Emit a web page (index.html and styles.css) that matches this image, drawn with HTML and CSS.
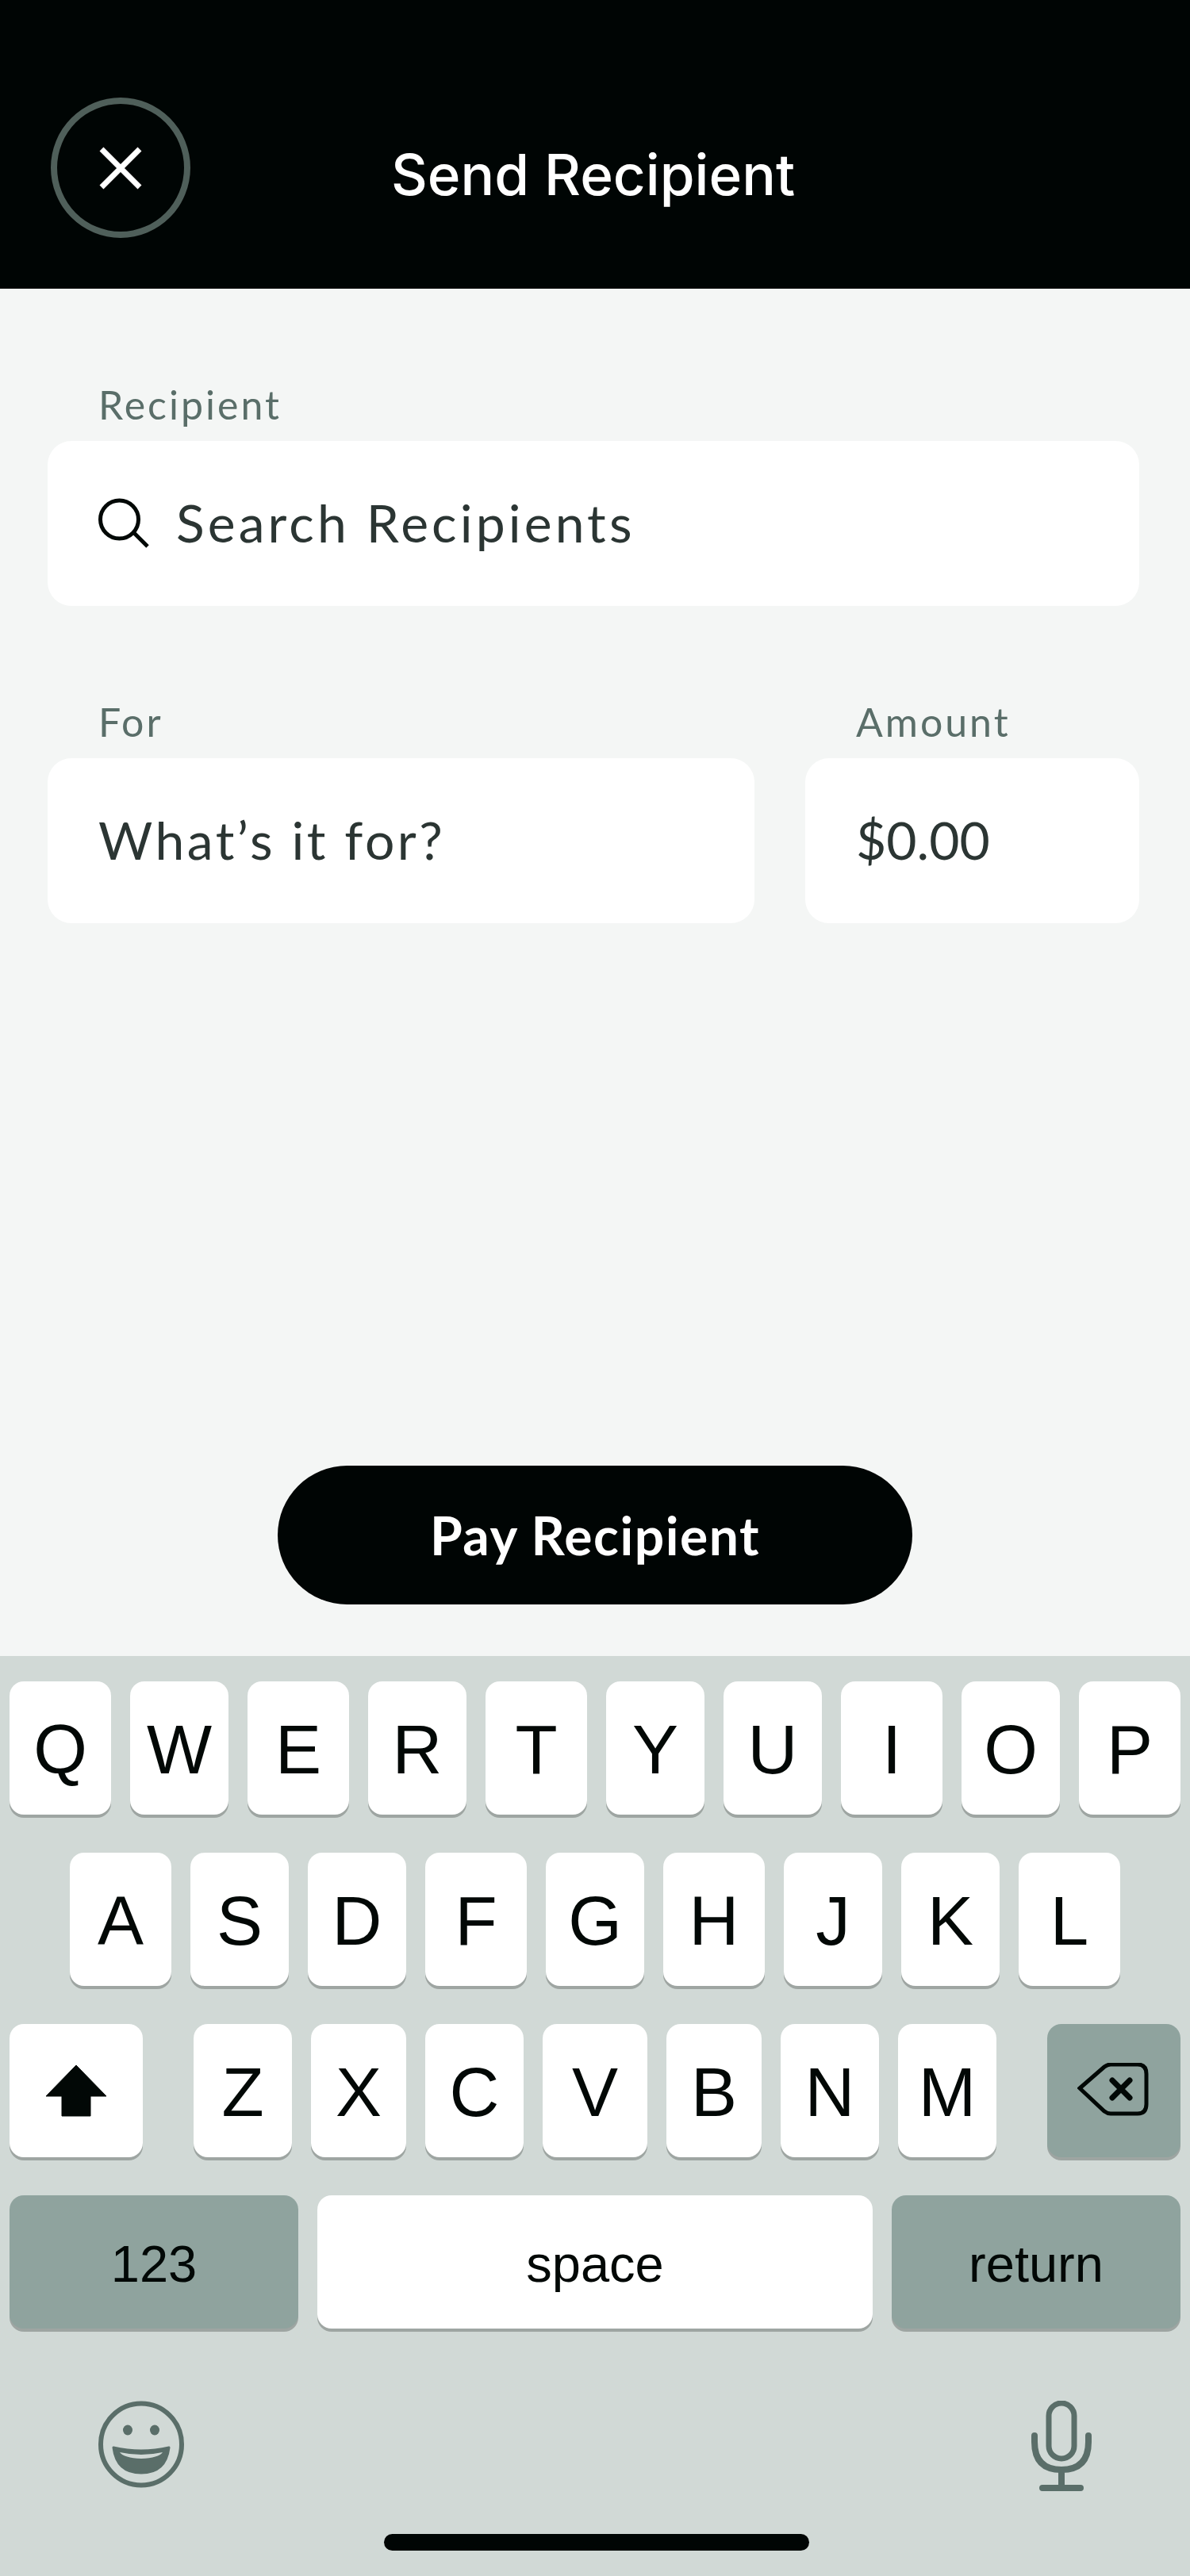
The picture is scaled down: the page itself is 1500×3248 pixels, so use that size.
FILE: index.html
```html
<!DOCTYPE html>
<html lang="en">
<head>
    <meta charset="UTF-8">
    <title>Send Recipient</title>
    <link rel="stylesheet" href="styles.css">
</head>
<body>
    <header class="top-bar">
        <button class="close-btn" aria-label="Close">
            <svg width="54" height="54" viewBox="0 0 54 54"><path d="M3 3 L51 51 M51 3 L3 51" stroke="#fff" stroke-width="7" fill="none"/></svg>
        </button>
        <h1 class="title">Send Recipient</h1>
    </header>

    <main class="form-area">
        <div class="field">
            <label class="field-label">Recipient</label>
            <div class="field-box">
                <svg class="search-icon" width="64" height="68" viewBox="0 0 64 68"><circle cx="26.500" cy="31" r="24" stroke="#020806" stroke-width="5" fill="none"/><path d="M45 48 L62 65" stroke="#020806" stroke-width="5" fill="none"/></svg>
                <span class="field-text field-search">Search Recipients</span>
            </div>
        </div>

        <div class="field-row">
            <div class="field field-for">
                <label class="field-label">For</label>
                <div class="field-box"><span class="field-text">What’s it for?</span></div>
            </div>
            <div class="field field-amount">
                <label class="field-label">Amount</label>
                <div class="field-box"><span class="field-text field-money">$0.00</span></div>
            </div>
        </div>

        <button class="pay-btn">Pay Recipient</button>
    </main>

    <section class="keyboard">
        <div class="key-row">
            <div class="key key-w">Q</div><div class="key">W</div><div class="key key-w">E</div><div class="key">R</div><div class="key key-w">T</div><div class="key">Y</div><div class="key">U</div><div class="key key-w">I</div><div class="key">O</div><div class="key key-w">P</div>
        </div>
        <div class="key-row">
            <div class="key key-w">A</div><div class="key">S</div><div class="key">D</div><div class="key key-w">F</div><div class="key">G</div><div class="key key-w">H</div><div class="key">J</div><div class="key">K</div><div class="key key-w">L</div>
        </div>
        <div class="key-row row-split">
            <div class="key key-wide">
                <svg width="78" height="66" viewBox="0 0 78 66"><path d="M39 1 L77 40 L57 40 L57 65 L21 65 L21 40 L1 40 Z" fill="#020806" stroke="#020806" stroke-width="1" stroke-linejoin="round"/></svg>
            </div>
            <div class="letters">
                <div class="key">Z</div><div class="key key-n">X</div><div class="key">C</div><div class="key key-v">V</div><div class="key key-n">B</div><div class="key">N</div><div class="key">M</div>
            </div>
            <div class="key key-wide key-dark">
                <svg width="92" height="70" viewBox="0 0 92 70"><path d="M3 32 L34 5 Q38 2 42 2 L76 2 Q87 2 87 14 L87 52 Q87 64 76 64 L42 64 Q38 64 34 61 Z" stroke="#020806" stroke-width="5" fill="none"/><path d="M44 22 L66 44 M66 22 L44 44" stroke="#020806" stroke-width="7" stroke-linecap="round" fill="none"/></svg>
            </div>
        </div>
        <div class="key-row">
            <div class="key key-dark key-small key-side">123</div>
            <div class="key key-small key-space">space</div>
            <div class="key key-dark key-small key-side">return</div>
        </div>
        <div class="key-extras">
            <svg width="108" height="110" viewBox="0 0 108 110"><ellipse cx="54" cy="55" rx="51" ry="51.500" stroke="#5a6e69" stroke-width="6" fill="none"/><ellipse cx="37" cy="37" rx="6" ry="6.500" fill="#5a6e69"/><ellipse cx="71" cy="37" rx="6" ry="6.500" fill="#5a6e69"/><path d="M19 59 Q54 67 89 59 Q85 91 54 91 Q23 91 19 59 Z" fill="#5a6e69" stroke="#5a6e69" stroke-width="3" stroke-linejoin="round"/><path d="M27 65 Q54 71 81 65 Q76 72 54 73 Q32 72 27 65 Z" fill="#d1d9d6"/></svg>
            <svg width="76" height="114" viewBox="0 0 76 114"><rect x="22" y="3" width="32" height="70" rx="16" stroke="#5a6e69" stroke-width="7" fill="none"/><path d="M4 44 L4 52 Q4 87 38 87 Q72 87 72 52 L72 44" stroke="#5a6e69" stroke-width="8" stroke-linecap="round" fill="none"/><path d="M38 87 L38 109 M14 110 L62 110" stroke="#5a6e69" stroke-width="8" stroke-linecap="round" fill="none"/></svg>
        </div>
        <div class="home-bar"></div>
    </section>
</body>
</html>
```

FILE: styles.css
```css
* {
    box-sizing: border-box;
}

body {
    margin: 0;
    width: 1500px;
    height: 3248px;
    display: flex;
    flex-direction: column;
    background: #f4f6f5;
    color: #020806;
    font-family: "Liberation Sans", Arial, sans-serif;
}

.top-bar {
    height: 364px;
    padding: 123px 0 0 64px;
    background: #000504;
    display: flex;
    align-items: flex-start;
}

.close-btn {
    width: 176px;
    height: 177px;
    padding: 0;
    border: 8px solid #4f5f5a;
    border-radius: 50%;
    background: transparent;
    display: flex;
    align-items: center;
    justify-content: center;
}

.title {
    margin: 0 0 0 253px;
    padding-top: 54px;
    color: #fff;
    font-family: "Inter", sans-serif;
    font-size: 71px;
    line-height: 86px;
    font-weight: 500;
    white-space: nowrap;
}

.form-area {
    flex: 1;
    padding: 118px 64px 65px 60px;
    display: flex;
    flex-direction: column;
}

.field-label {
    display: block;
    height: 74px;
    padding-left: 64px;
    color: #5a6e69;
    font-family: "Lato", sans-serif;
    font-size: 50px;
    line-height: 56px;
    letter-spacing: 3px;
}

.field-box {
    height: 208px;
    padding: 0 0 4px 64px;
    background: #fff;
    border-radius: 30px;
    display: flex;
    align-items: center;
}

.search-icon {
    margin-right: 34px;
    flex: none;
}

.field-text {
    color: #2b3533;
    font-family: "Lato", sans-serif;
    font-size: 66px;
    letter-spacing: 3.500px;
    white-space: nowrap;
}

.field-search {
    letter-spacing: 4.100px;
}

.field-money {
    letter-spacing: 0;
}

.field-row {
    margin-top: 118px;
    display: flex;
    gap: 64px;
}

.field-for {
    width: 891px;
}

.field-amount {
    width: 421px;
}

.pay-btn {
    width: 800px;
    height: 175px;
    margin: auto 0 0 290px;
    padding: 0;
    border: 0;
    border-radius: 88px;
    background: #000504;
    color: #fff;
    font-family: "Lato", sans-serif;
    font-size: 66px;
    letter-spacing: 1.500px;
    font-weight: 700;
}

.keyboard {
    height: 1160px;
    padding: 32px 12px 0;
    background: #d1d9d6;
    display: flex;
    flex-direction: column;
    gap: 48px;
}

.key-row {
    display: flex;
    justify-content: center;
    gap: 24px;
}

.key {
    width: 124px;
    height: 168px;
    padding-top: 4px;
    background: #fff;
    border-radius: 18px;
    box-shadow: 0 4px 0 #9ea5a2;
    font-size: 87px;
    display: flex;
    align-items: center;
    justify-content: center;
}

.key svg {
    margin-top: -4px;
}

.key-w {
    width: 128px;
}

.key-n {
    width: 120px;
}

.key-v {
    width: 132px;
}

.row-split {
    justify-content: space-between;
}

.letters {
    display: flex;
    gap: 24px;
}

.key-wide {
    width: 168px;
}

.key-dark {
    background: #8fa39e;
}

.key-small {
    font-size: 65px;
}

.key-side {
    width: 364px;
}

.key-space {
    width: 700px;
}

.key-extras {
    margin-top: 43px;
    padding: 0 112px;
    display: flex;
    justify-content: space-between;
}

.home-bar {
    width: 536px;
    height: 21px;
    margin: 6px 0 0 472px;
    border-radius: 11px;
    background: #000504;
}
```
